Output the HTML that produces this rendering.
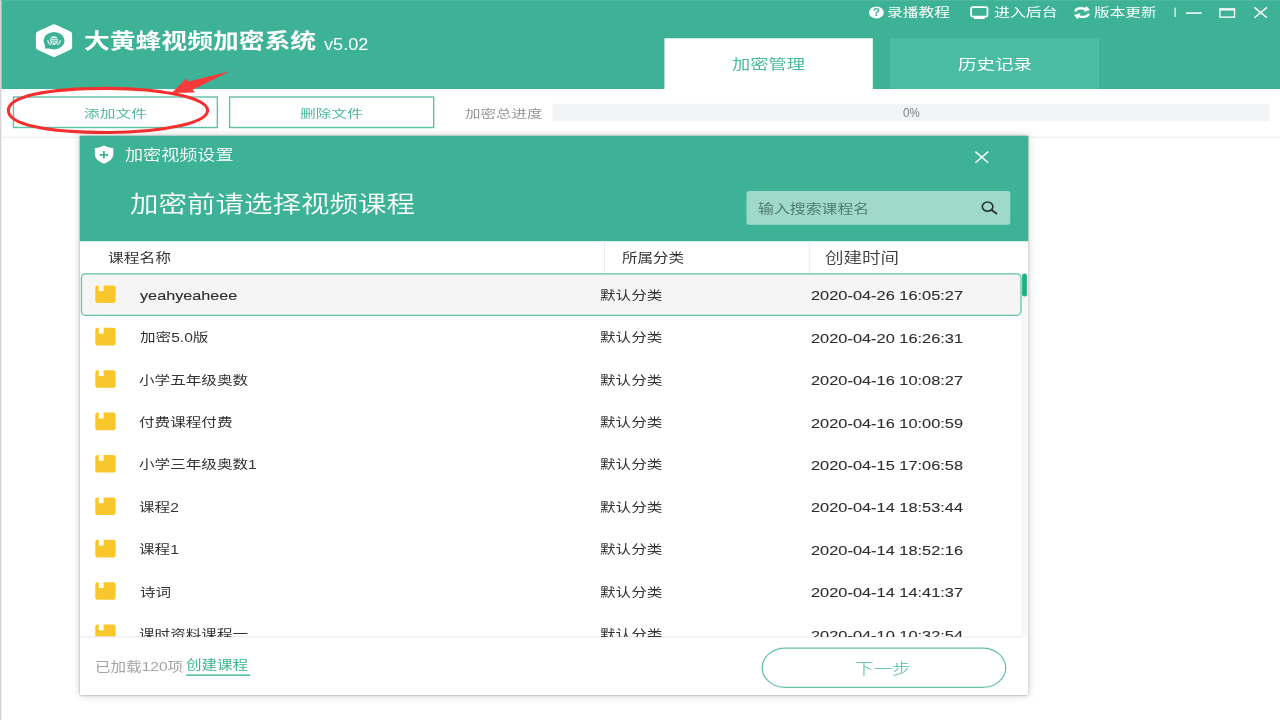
<!DOCTYPE html>
<html lang="zh-CN"><head><meta charset="utf-8"><title>大黄蜂视频加密系统</title>
<style>
html,body{margin:0;padding:0;width:1280px;height:720px;overflow:hidden;background:#fff}
body{position:relative;font-family:"Liberation Sans","Noto Sans CJK SC",sans-serif;filter:blur(.4px)}
svg{position:absolute;left:0;top:0}
.t{position:absolute;white-space:nowrap;line-height:1;transform-origin:0 0;font-weight:400}
#shadow{position:absolute;left:80px;top:136px;width:948px;height:559px;background:#fff;box-shadow:0 0 2px rgba(0,0,0,.4),0 0 8px rgba(0,0,0,.2)}
#rows{position:absolute;left:80px;top:273px;width:948px;height:363.8px;overflow:hidden}
#rows .in{position:absolute;left:-80px;top:-273px;width:1280px;height:720px}
</style></head><body>
<svg width="1280" height="720" viewBox="0 0 1280 720">
<!-- left edge strip -->
<rect x="0" y="0" width="1" height="720" fill="#d4d4d4"/>
<rect x="1" y="89" width="1" height="631" fill="#f1f1f1"/>
<!-- header -->
<rect x="1.4" y="0" width="1278.6" height="89" fill="#3eb296"/>
<rect x="1.4" y="0" width="1278.6" height="1" fill="#4db89f"/>
<!-- tabs -->
<rect x="664.4" y="38.3" width="208.4" height="51" fill="#fff"/>
<rect x="890" y="38.3" width="209.2" height="50.7" fill="#4abda2"/>
<!-- toolbar -->
<rect x="2" y="136.7" width="1278" height="1" fill="#e6e8ed"/>
<rect x="552.5" y="103.8" width="717" height="17.1" fill="#f2f3f5"/>
<rect x="13.45" y="97" width="203.9" height="30.5" fill="#fff" stroke="#5fc0a8" stroke-width="1.4"/>
<rect x="229.6" y="97" width="204.1" height="30.5" fill="#fff" stroke="#5fc0a8" stroke-width="1.4"/>
<!-- logo -->
<path d="M54.00 27.30 L69.10 34.27 L69.10 47.03 L54.00 54.00 L38.90 47.03 L38.90 34.27 Z" fill="#fff" stroke="#fff" stroke-width="6" stroke-linejoin="round"/>
<ellipse cx="54.05" cy="40.7" rx="10.55" ry="8.7" fill="#3eb296"/>
<path d="M45 43 L45 48.6 L52 48.6 Z" fill="#3eb296"/>
<g fill="none" stroke="#fff" stroke-linecap="round">
<path d="M47.8 40.6 Q47.9 43.3 50.4 44.4" stroke-width="1.3" opacity=".85"/>
<path d="M60.3 40.6 Q60.2 43.3 57.7 44.4" stroke-width="1.3" opacity=".85"/>
</g>
<path d="M50 40.2 Q50 36.3 54 36.3 Q58 36.3 58 40.2 Q58 43.5 54 45.3 Q50 43.5 50 40.2 Z" fill="#fff" opacity=".85"/>
<rect x="50.6" y="38.3" width="6.8" height="0.9" fill="#3eb296"/>
<rect x="50.8" y="40.4" width="6.4" height="0.9" fill="#3eb296"/>
<rect x="52" y="42.4" width="4" height="0.8" fill="#3eb296"/>
<!-- help icon -->
<ellipse cx="876.4" cy="12.5" rx="7.4" ry="6.1" fill="#fff"/>
<text x="876.4" y="16.1" font-family="Liberation Sans, sans-serif" font-weight="700" font-size="10" fill="#3eb296" text-anchor="middle" transform="translate(876.4 0) scale(1.2 1) translate(-876.4 0)">?</text>
<!-- monitor icon -->
<rect x="971.15" y="7.05" width="16.3" height="9.6" rx="1.6" ry="1.4" fill="none" stroke="#fff" stroke-width="1.7"/>
<rect x="974" y="17" width="10.6" height="2" fill="#fff"/>
<!-- refresh icon -->
<g fill="none" stroke="#fff" stroke-width="2.4">
<path d="M1075.2 11.5 Q1076.6 6.9 1085.2 8.8"/>
<path d="M1088.8 13.6 Q1087.4 18.2 1078.8 16.3"/>
</g>
<path d="M1086.2 5.9 L1090.1 10.1 L1083.5 12.1 Z" fill="#fff"/>
<path d="M1077.8 19.2 L1073.9 15 L1080.5 13 Z" fill="#fff"/>
<!-- window controls -->
<rect x="1174.4" y="7.6" width="1.4" height="9.4" fill="#d9f0ea"/>
<rect x="1186" y="12.3" width="15.7" height="1.5" fill="#fff"/>
<rect x="1219.9" y="9.4" width="14.6" height="7.7" fill="none" stroke="#fff" stroke-width="1.35"/>
<rect x="1219.25" y="8.25" width="15.95" height="2.2" fill="#fff"/>
<path d="M1254.4 7.4 L1267 17.7 M1267 7.4 L1254.4 17.7" stroke="#fff" stroke-width="1.4" fill="none"/>
<!-- annotation -->
<path d="M8.400000000000006 110.45 C8.400000000000006 96.96900000000001 44.256 88.35 108.0 88.35 C163.00907999999998 88.35 207.6 98.24417 207.6 110.45 C207.6 122.65583000000001 163.00907999999998 132.55 108.0 132.55 C44.256 132.55 8.400000000000006 123.931 8.400000000000006 110.45 Z" fill="none" stroke="#f5302e" stroke-width="3.1"/>
<path d="M230.1 71.3 L188.7 81.5 L185.9 78.75 L171.6 93.1 L194.9 92.6 L192.6 89.7 Z" fill="#f93a3a"/>
</svg>

<div id="shadow"></div>
<svg width="1280" height="720" viewBox="0 0 1280 720">
<defs><clipPath id="rowclip"><rect x="80" y="241" width="948" height="395.8"/></clipPath></defs>
<rect x="79.8" y="135.8" width="948.5" height="559.2" fill="#fff"/>
<rect x="79.8" y="135.8" width="948.5" height="105.4" fill="#3eb296"/>
<!-- shield -->
<path d="M104 145.6 Q108 147.8 113.3 148.2 L113.3 154.5 Q113.3 160 104 163.7 Q94.8 160 94.8 154.5 L94.8 148.2 Q100 147.8 104 145.6 Z" fill="#fff"/>
<path d="M103.85 151 L103.85 158.6 M99.6 154.8 L108.1 154.8" stroke="#3eb296" stroke-width="1.8" fill="none"/>
<!-- close -->
<path d="M975.4 151.6 L988.2 162.7 M988.2 151.6 L975.4 162.7" stroke="#fff" stroke-width="1.4" fill="none"/>
<!-- search -->
<rect x="746.5" y="190.9" width="263.7" height="33.9" rx="2.5" fill="#a0d9ca"/>
<ellipse cx="987.6" cy="206.6" rx="5.3" ry="4.6" fill="none" stroke="#26332f" stroke-width="1.6"/>
<path d="M991.6 209.9 L996.4 213.5" stroke="#26332f" stroke-width="1.9" stroke-linecap="round"/>
<!-- table header separators -->
<rect x="604" y="241.2" width="1" height="32.4" fill="#ececec"/>
<rect x="808.8" y="241.2" width="1" height="32.4" fill="#ececec"/>
<!-- scrollbar -->
<rect x="1021.8" y="273.6" width="5.4" height="363" fill="#f7f7f7"/>
<rect x="1022.1" y="273.6" width="4.8" height="23" rx="2.4" fill="#1fb27c"/>
<!-- selected row -->
<rect x="81.4" y="273.9" width="939.6" height="41.4" rx="4" fill="#f5f5f5" stroke="#62c1a9" stroke-width="1.3"/>
<g clip-path="url(#rowclip)" id="icons">
<rect x="95.3" y="285.4" width="20.3" height="17.6" rx="2.2" fill="#f8c72c"/><rect x="98.8" y="284.9" width="4.8" height="6.3" fill="#f5f5f5"/>
<rect x="95.3" y="327.8" width="20.3" height="17.6" rx="2.2" fill="#f8c72c"/><rect x="98.8" y="327.3" width="4.8" height="6.3" fill="#fff"/>
<rect x="95.3" y="370.2" width="20.3" height="17.6" rx="2.2" fill="#f8c72c"/><rect x="98.8" y="369.7" width="4.8" height="6.3" fill="#fff"/>
<rect x="95.3" y="412.6" width="20.3" height="17.6" rx="2.2" fill="#f8c72c"/><rect x="98.8" y="412.1" width="4.8" height="6.3" fill="#fff"/>
<rect x="95.3" y="455.0" width="20.3" height="17.6" rx="2.2" fill="#f8c72c"/><rect x="98.8" y="454.5" width="4.8" height="6.3" fill="#fff"/>
<rect x="95.3" y="497.4" width="20.3" height="17.6" rx="2.2" fill="#f8c72c"/><rect x="98.8" y="496.9" width="4.8" height="6.3" fill="#fff"/>
<rect x="95.3" y="539.8" width="20.3" height="17.6" rx="2.2" fill="#f8c72c"/><rect x="98.8" y="539.3" width="4.8" height="6.3" fill="#fff"/>
<rect x="95.3" y="582.2" width="20.3" height="17.6" rx="2.2" fill="#f8c72c"/><rect x="98.8" y="581.7" width="4.8" height="6.3" fill="#fff"/>
<rect x="95.3" y="624.6" width="20.3" height="17.6" rx="2.2" fill="#f8c72c"/><rect x="98.8" y="624.1" width="4.8" height="6.3" fill="#fff"/>
</g>
<!-- footer -->
<rect x="80" y="636.4" width="942" height="1" fill="#e6e8ed"/>
<rect x="186.2" y="674.4" width="64.2" height="1.5" fill="#4cbb9f"/>
<rect x="762.2" y="648.1" width="243.5" height="39.3" rx="23" ry="19.65" fill="#fff" stroke="#62c1a9" stroke-width="1.2"/>
</svg>

<div id="rows"><div class="in">
<span class="t" style="left:140.00px;top:288.70px;font-size:13.6px;font-weight:400;color:#2e2e2e;transform:scaleX(1.1928);-webkit-text-stroke:0.1px #2e2e2e;">yeahyeaheee</span>
<span class="t" style="left:599.50px;top:290.25px;font-size:12.5px;font-weight:400;color:#333;transform:scaleX(1.2460);">默认分类</span>
<span class="t" style="left:810.50px;top:288.55px;font-size:13.4px;font-weight:400;color:#2e2e2e;transform:scaleX(1.2227);-webkit-text-stroke:0.1px #2e2e2e;">2020-04-26 16:05:27</span>
<span class="t" style="left:140.00px;top:332.25px;font-size:12.5px;font-weight:400;color:#333;transform:scaleX(1.2460);">加密5.0版</span>
<span class="t" style="left:599.50px;top:332.25px;font-size:12.5px;font-weight:400;color:#333;transform:scaleX(1.2460);">默认分类</span>
<span class="t" style="left:810.50px;top:331.55px;font-size:13.4px;font-weight:400;color:#2e2e2e;transform:scaleX(1.2227);-webkit-text-stroke:0.1px #2e2e2e;">2020-04-20 16:26:31</span>
<span class="t" style="left:139.00px;top:375.25px;font-size:12.5px;font-weight:400;color:#333;transform:scaleX(1.2460);">小学五年级奥数</span>
<span class="t" style="left:599.50px;top:375.25px;font-size:12.5px;font-weight:400;color:#333;transform:scaleX(1.2460);">默认分类</span>
<span class="t" style="left:810.50px;top:373.55px;font-size:13.4px;font-weight:400;color:#2e2e2e;transform:scaleX(1.2227);-webkit-text-stroke:0.1px #2e2e2e;">2020-04-16 10:08:27</span>
<span class="t" style="left:139.00px;top:417.25px;font-size:12.5px;font-weight:400;color:#333;transform:scaleX(1.2460);">付费课程付费</span>
<span class="t" style="left:599.50px;top:417.25px;font-size:12.5px;font-weight:400;color:#333;transform:scaleX(1.2460);">默认分类</span>
<span class="t" style="left:810.50px;top:416.55px;font-size:13.4px;font-weight:400;color:#2e2e2e;transform:scaleX(1.2227);-webkit-text-stroke:0.1px #2e2e2e;">2020-04-16 10:00:59</span>
<span class="t" style="left:139.00px;top:459.25px;font-size:12.5px;font-weight:400;color:#333;transform:scaleX(1.2460);">小学三年级奥数1</span>
<span class="t" style="left:599.50px;top:459.25px;font-size:12.5px;font-weight:400;color:#333;transform:scaleX(1.2460);">默认分类</span>
<span class="t" style="left:810.50px;top:458.55px;font-size:13.4px;font-weight:400;color:#2e2e2e;transform:scaleX(1.2227);-webkit-text-stroke:0.1px #2e2e2e;">2020-04-15 17:06:58</span>
<span class="t" style="left:139.00px;top:502.25px;font-size:12.5px;font-weight:400;color:#333;transform:scaleX(1.2460);">课程2</span>
<span class="t" style="left:599.50px;top:502.25px;font-size:12.5px;font-weight:400;color:#333;transform:scaleX(1.2460);">默认分类</span>
<span class="t" style="left:810.50px;top:500.55px;font-size:13.4px;font-weight:400;color:#2e2e2e;transform:scaleX(1.2227);-webkit-text-stroke:0.1px #2e2e2e;">2020-04-14 18:53:44</span>
<span class="t" style="left:139.00px;top:544.25px;font-size:12.5px;font-weight:400;color:#333;transform:scaleX(1.2460);">课程1</span>
<span class="t" style="left:599.50px;top:544.25px;font-size:12.5px;font-weight:400;color:#333;transform:scaleX(1.2460);">默认分类</span>
<span class="t" style="left:810.50px;top:543.55px;font-size:13.4px;font-weight:400;color:#2e2e2e;transform:scaleX(1.2227);-webkit-text-stroke:0.1px #2e2e2e;">2020-04-14 18:52:16</span>
<span class="t" style="left:140.00px;top:587.25px;font-size:12.5px;font-weight:400;color:#333;transform:scaleX(1.2460);">诗词</span>
<span class="t" style="left:599.50px;top:587.25px;font-size:12.5px;font-weight:400;color:#333;transform:scaleX(1.2460);">默认分类</span>
<span class="t" style="left:810.50px;top:585.55px;font-size:13.4px;font-weight:400;color:#2e2e2e;transform:scaleX(1.2227);-webkit-text-stroke:0.1px #2e2e2e;">2020-04-14 14:41:37</span>
<span class="t" style="left:139.00px;top:629.25px;font-size:12.5px;font-weight:400;color:#333;transform:scaleX(1.2460);">课时资料课程一</span>
<span class="t" style="left:599.50px;top:629.25px;font-size:12.5px;font-weight:400;color:#333;transform:scaleX(1.2460);">默认分类</span>
<span class="t" style="left:810.50px;top:628.55px;font-size:13.4px;font-weight:400;color:#2e2e2e;transform:scaleX(1.2227);-webkit-text-stroke:0.1px #2e2e2e;">2020-04-10 10:32:54</span>
</div></div>
<span class="t" style="left:84.00px;top:29.50px;font-size:21.0px;font-weight:700;color:#fff;transform:scaleX(1.2277);">大黄蜂视频加密系统</span>
<span class="t" style="left:323.50px;top:36.30px;font-size:16.4px;font-weight:400;color:#fff;transform:scaleX(1.1053);">v5.02</span>
<span class="t" style="left:887.00px;top:7.45px;font-size:12.1px;font-weight:400;color:#fff;transform:scaleX(1.3012);">录播教程</span>
<span class="t" style="left:993.50px;top:7.45px;font-size:12.1px;font-weight:400;color:#fff;transform:scaleX(1.3157);">进入后台</span>
<span class="t" style="left:1093.50px;top:7.45px;font-size:12.1px;font-weight:400;color:#fff;transform:scaleX(1.2954);">版本更新</span>
<span class="t" style="left:732.00px;top:58.40px;font-size:13.2px;font-weight:400;color:#4ab99e;transform:scaleX(1.3858);">加密管理</span>
<span class="t" style="left:957.50px;top:58.40px;font-size:13.2px;font-weight:400;color:#fff;transform:scaleX(1.4014);">历史记录</span>
<span class="t" style="left:83.75px;top:109.25px;font-size:11.5px;font-weight:400;color:#4ab89d;transform:scaleX(1.3689);">添加文件</span>
<span class="t" style="left:300.00px;top:109.25px;font-size:11.5px;font-weight:400;color:#4ab89d;transform:scaleX(1.3706);">删除文件</span>
<span class="t" style="left:465.00px;top:109.25px;font-size:11.5px;font-weight:400;color:#969696;transform:scaleX(1.3461);">加密总进度</span>
<span class="t" style="left:903.00px;top:107.20px;font-size:12.6px;font-weight:400;color:#808080;transform:scaleX(0.9172);">0%</span>
<span class="t" style="left:124.50px;top:148.20px;font-size:14.6px;font-weight:350;color:#fff;transform:scaleX(1.2397);">加密视频设置</span>
<span class="t" style="left:129.50px;top:192.90px;font-size:23.2px;font-weight:350;color:#fff;transform:scaleX(1.2286);">加密前请选择视频课程</span>
<span class="t" style="left:758.00px;top:202.70px;font-size:12.6px;font-weight:400;color:#4f7b6f;transform:scaleX(1.2606);">输入搜索课程名</span>
<span class="t" style="left:107.50px;top:252.20px;font-size:12.6px;font-weight:400;color:#333;transform:scaleX(1.2489);">课程名称</span>
<span class="t" style="left:621.50px;top:252.20px;font-size:12.6px;font-weight:400;color:#333;transform:scaleX(1.2327);">所属分类</span>
<span class="t" style="left:825.00px;top:251.10px;font-size:14.8px;font-weight:350;color:#3a3a3a;transform:scaleX(1.2522);">创建时间</span>
<span class="t" style="left:95.00px;top:660.70px;font-size:12.6px;font-weight:400;color:#a3a3a3;transform:scaleX(1.2344);">已加载120项</span>
<span class="t" style="left:186.00px;top:659.20px;font-size:12.6px;font-weight:400;color:#3bb58e;transform:scaleX(1.2326);">创建课程</span>
<span class="t" style="left:855.00px;top:662.25px;font-size:14.5px;font-weight:300;color:#48b99d;transform:scaleX(1.2866);">下一步</span>
</body></html>
